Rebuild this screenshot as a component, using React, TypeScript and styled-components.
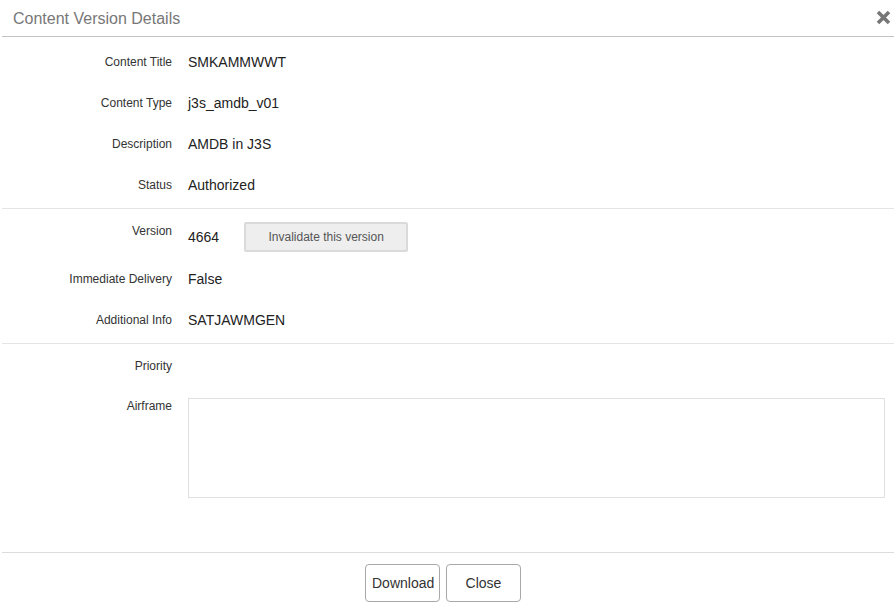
import React from "react";
import styled, { createGlobalStyle } from "styled-components";

const GlobalStyle = createGlobalStyle`
  html, body {
    margin: 0;
    padding: 0;
    background: #ffffff;
    font-family: "Liberation Sans", Arial, sans-serif;
  }
`;

const rowsTop = [
  { label: "Content Title", value: "SMKAMMWWT" },
  { label: "Content Type", value: "j3s_amdb_v01" },
  { label: "Description", value: "AMDB in J3S" },
  { label: "Status", value: "Authorized" },
];

const CloseIcon = () => (
  <svg width="15" height="15" viewBox="0 0 15 15">
    <path
      d="M2 2 L13 13 M13 2 L2 13"
      stroke="#777"
      strokeWidth="3.6"
      strokeLinecap="butt"
    />
  </svg>
);

const App = () => {
  return (
    <>
      <GlobalStyle />
      <Dialog>
        <Header>
          <Title>Content Version Details</Title>
          <CloseButton aria-label="close">
            <CloseIcon />
          </CloseButton>
        </Header>

        <Section $top={4.5} $bottom={2.5}>
          {rowsTop.map(r => (
            <Row key={r.label}>
              <Label>{r.label}</Label>
              <Value>{r.value}</Value>
            </Row>
          ))}
        </Section>

        <Section $top={8} $bottom={2.5}>
          <Row>
            <Label $raised>Version</Label>
            <ValueGroup>
              <Value>4664</Value>
              <InvalidateButton>Invalidate this version</InvalidateButton>
            </ValueGroup>
          </Row>
          <Row>
            <Label>Immediate Delivery</Label>
            <Value>False</Value>
          </Row>
          <Row>
            <Label>Additional Info</Label>
            <Value>SATJAWMGEN</Value>
          </Row>
        </Section>

        <Section $top={1.5} $bottom={54} $last>
          <Row>
            <Label>Priority</Label>
            <Value />
          </Row>
          <TextRow>
            <Label>Airframe</Label>
            <TextBox readOnly />
          </TextRow>
        </Section>

        <Footer>
          <FooterButton>Download</FooterButton>
          <FooterButton>Close</FooterButton>
        </Footer>
      </Dialog>
    </>
  );
};
export default App;

const Dialog = styled.div`
  margin-left: 2px;
  width: 892px;
  display: flex;
  flex-direction: column;
`;

const Header = styled.div`
  height: 36px;
  display: flex;
  align-items: flex-start;
  justify-content: space-between;
  border-bottom: 1px solid #c4c4c4;
  padding: 0 3px 0 11px;
`;

const Title = styled.h4`
  margin: 10px 0 0;
  font-size: 16px;
  line-height: 18px;
  font-weight: normal;
  color: #777777;
`;

const CloseButton = styled.button`
  margin-top: 10px;
  padding: 0;
  border: none;
  background: none;
  display: flex;
  cursor: pointer;
`;

const Section = styled.div<{ $top: number; $bottom: number; $last?: boolean }>`
  padding-top: ${p => p.$top}px;
  padding-bottom: ${p => p.$bottom}px;
  border-bottom: 1px solid ${p => (p.$last ? "#dcdcdc" : "#e5e5e5")};
`;

const Row = styled.div`
  display: grid;
  grid-template-columns: 170px 1fr;
  column-gap: 16px;
  align-items: center;
  height: 41px;
`;

const TextRow = styled.div`
  display: grid;
  grid-template-columns: 170px 1fr;
  column-gap: 16px;
  align-items: start;
  margin-top: 11.5px;
`;

const Label = styled.label<{ $raised?: boolean }>`
  text-align: right;
  font-size: 12px;
  line-height: 14px;
  color: #333333;
  ${p => (p.$raised ? "align-self: start; margin-top: 6.5px;" : "")}
  ${TextRow} & {
    margin-top: 1px;
  }
`;

const Value = styled.div`
  font-size: 14px;
  line-height: 16px;
  color: #222222;
`;

const ValueGroup = styled.div`
  display: flex;
  align-items: center;
  gap: 25px;
  margin-top: -1px;
`;

const InvalidateButton = styled.button`
  width: 164px;
  height: 30px;
  background: #eeeeee;
  border: 2px solid #dadada;
  border-radius: 2px;
  font-family: "Liberation Sans", Arial, sans-serif;
  font-size: 12px;
  color: #555555;
  cursor: pointer;
`;

const TextBox = styled.textarea`
  width: 697px;
  height: 100px;
  box-sizing: border-box;
  border: 1px solid #e0e0e0;
  resize: none;
  outline: none;
  margin: 0;
`;

const Footer = styled.div`
  display: flex;
  justify-content: center;
  gap: 6px;
  padding: 11px 10px 0 0;
`;

const FooterButton = styled.button`
  width: 75px;
  height: 38px;
  background: #ffffff;
  border: 1px solid #a8a8a8;
  border-radius: 4px;
  font-family: "Liberation Sans", Arial, sans-serif;
  font-size: 14px;
  color: #333333;
  cursor: pointer;
`;
